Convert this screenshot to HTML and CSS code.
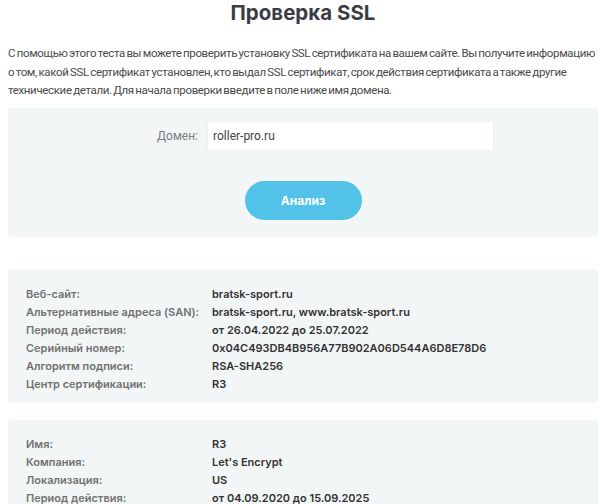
FILE: index.html
```html
<!DOCTYPE html>
<html lang="ru">
<head>
    <meta charset="UTF-8">
    <meta name="viewport" content="width=device-width, initial-scale=1.0">
    <title>Проверка SSL</title>
    <link rel="stylesheet" href="styles.css">
</head>
<body>
    <div class="container">
        <h1>Проверка SSL</h1>

        <p class="intro">С помощью этого теста вы можете проверить установку SSL сертификата на вашем сайте. Вы получите информацию о том, какой SSL сертификат установлен, кто выдал SSL сертификат, срок действия сертификата а также другие технические детали. Для начала проверки введите в поле ниже имя домена.</p>

        <div class="check-form">
            <div class="field">
                <label for="domain">Домен:</label>
                <input type="text" id="domain" value="roller-pro.ru">
            </div>
            <button class="analyze-btn">Анализ</button>
        </div>

        <div class="result">
            <div class="row"><span class="key">Веб-сайт:</span><span class="val">bratsk-sport.ru</span></div>
            <div class="row"><span class="key">Альтернативные адреса (SAN):</span><span class="val">bratsk-sport.ru, www.bratsk-sport.ru</span></div>
            <div class="row"><span class="key">Период действия:</span><span class="val">от 26.04.2022 до 25.07.2022</span></div>
            <div class="row"><span class="key">Серийный номер:</span><span class="val">0x04C493DB4B956A77B902A06D544A6D8E78D6</span></div>
            <div class="row"><span class="key">Алгоритм подписи:</span><span class="val">RSA-SHA256</span></div>
            <div class="row"><span class="key">Центр сертификации:</span><span class="val">R3</span></div>
        </div>

        <div class="result">
            <div class="row"><span class="key">Имя:</span><span class="val">R3</span></div>
            <div class="row"><span class="key">Компания:</span><span class="val">Let's Encrypt</span></div>
            <div class="row"><span class="key">Локализация:</span><span class="val">US</span></div>
            <div class="row"><span class="key">Период действия:</span><span class="val">от 04.09.2020 до 15.09.2025</span></div>
        </div>
    </div>
</body>
</html>
```

FILE: styles.css
```css
body {
    margin: 0;
    background-color: #fff;
    font-family: Roboto, "Open Sans", sans-serif;
    color: #444;
}

.container {
    width: 590px;
    margin-left: 8px;
}

h1 {
    margin: 0;
    font-family: Inter, sans-serif;
    font-size: 20.5px;
    line-height: 26px;
    font-weight: 700;
    color: #3c3d44;
    text-align: center;
}

.intro {
    margin: 18px 0 8px;
    font-size: 11.5px;
    line-height: 18.5px;
    letter-spacing: -0.35px;
    word-spacing: -1px;
    color: #4a4a4a;
}

.check-form {
    background-color: #f3f6f7;
    border-radius: 4px;
    padding: 13px 0 17px;
    display: flex;
    flex-direction: column;
    align-items: center;
    gap: 30px;
}

.field {
    align-self: stretch;
    display: grid;
    grid-template-columns: 190px 287px;
    column-gap: 9px;
    align-items: center;
}

.field label {
    text-align: right;
    font-size: 12px;
    color: #7d7d7d;
}

.field input {
    height: 30px;
    box-sizing: border-box;
    border: 1px solid #eef0f1;
    background: #fff;
    padding: 0 5px;
    font-family: Roboto, sans-serif;
    font-size: 12px;
    color: #444;
    outline: none;
}

.analyze-btn {
    width: 117px;
    height: 39px;
    border: none;
    border-radius: 20px;
    background-color: #52c2e9;
    color: #fff;
    font-family: Inter, sans-serif;
    font-size: 12px;
    font-weight: 700;
    cursor: pointer;
}

.result {
    background-color: #f3f6f7;
    border-radius: 4px;
    padding: 16px 18px 10px;
    margin-top: 32px;
    font-family: Inter, sans-serif;
    font-size: 11px;
    font-weight: 600;
    line-height: 18px;
}

.result + .result {
    margin-top: 17px;
    padding-top: 15px;
}

.row {
    display: grid;
    grid-template-columns: 186px 1fr;
}

.key {
    color: #727272;
}

.val {
    color: #333;
}
```
